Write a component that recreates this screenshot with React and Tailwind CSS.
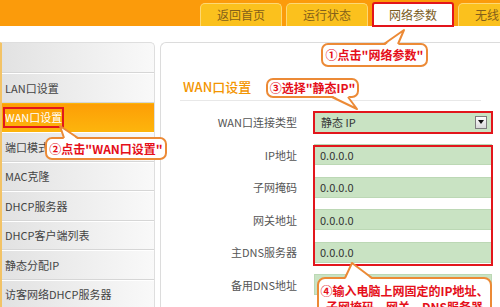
import React from "react";

const tabs = ["返回首页", "运行状态", "网络参数", "无线设置"];
const menu = [
  "LAN口设置",
  "WAN口设置",
  "端口模式",
  "MAC克隆",
  "DHCP服务器",
  "DHCP客户端列表",
  "静态分配IP",
  "访客网络DHCP服务器",
];
const rows = [
  ["IP地址", "0.0.0.0"],
  ["子网掩码", "0.0.0.0"],
  ["网关地址", "0.0.0.0"],
  ["主DNS服务器", "0.0.0.0"],
  ["备用DNS地址", "0.0.0.0"],
];

function Bubble({ className, children }) {
  return (
    <div
      className={
        "absolute flex items-center justify-center rounded-[7px] border-2 border-[#ec8a36] bg-white text-[12px] font-bold leading-none text-[#e50f1a] whitespace-nowrap " +
        className
      }
    >
      {children}
    </div>
  );
}

export default function App() {
  return (
    <div className="relative h-[307px] w-[500px] overflow-hidden bg-white font-['Noto_Sans_CJK_SC','Noto_Sans',sans-serif]">
      {/* top bar */}
      <div className="flex h-[26px] items-end gap-[4px] bg-[#fb9b0b] pl-[200px]">
        {tabs.map((t, i) =>
          i === 2 ? (
            <div
              key={t}
              className="relative z-10 mb-[-1px] flex h-[25px] w-[82px] shrink-0 items-center justify-center rounded-t-[3px] border-2 border-[#e3141b] bg-white text-[12px] text-[#7a5b1c]"
            >
              {t}
            </div>
          ) : (
            <div
              key={t}
              className="flex h-[23px] w-[82px] shrink-0 items-center justify-center rounded-t-[5px] border border-b-0 border-[#fdd873] bg-[#fbc11d] text-[12px] text-[#84601a]"
            >
              {t}
            </div>
          )
        )}
      </div>
      <div className="h-[16px]" />
      {/* main */}
      <div className="flex h-[265px] gap-[5px]">
        {/* sidebar */}
        <div className="w-[155px] shrink-0 rounded-tr-[5px] border-l-2 border-t border-r border-[#f3c366] border-t-[#dedede] border-r-[#dedede] bg-gradient-to-r from-[#e2e2e2] to-[#f9f9f9]">
          <div className="h-[30px] border-b border-[#d6d6d6]" />
          {menu.map((m, i) => (
            <div
              key={m}
              className={
                "flex h-[29.5px] items-center border-b border-t pl-[3px] text-[11px] " +
                (i === 1
                  ? "border-[#fdb40a] bg-gradient-to-b from-[#fd9e06] to-[#fdb40c] text-white"
                  : "border-b-[#d6d6d6] border-t-white text-[#444]")
              }
            >
              {m}
            </div>
          ))}
        </div>
        {/* content */}
        <div className="flex-1 rounded-tl-[6px] border-l border-t border-[#dcdcdc] bg-white">
          <div className="mx-[19px] mt-[35px] border-b border-[#e8e8e8] pb-[4px] pl-[3px] text-[13px] font-medium leading-[18px] text-[#f39500]">
            WAN口设置
          </div>
          <div className="mt-[5px] flex flex-col">
            <div className="flex h-[32.5px] items-center">
              <div className="w-[136px] shrink-0 text-right text-[11px] text-[#555]">WAN口连接类型</div>
              <div className="ml-[16px] flex h-[23px] w-[180px] items-center justify-between border-2 border-[#e2161c] bg-[#c9e3c3] pl-[6px] pr-[4px] text-[11px] text-[#333]">
                <span>静态 IP</span>
                <span className="flex h-[13px] w-[12px] items-center justify-center border border-[#7d7d7d] bg-gradient-to-b from-white to-[#d8d8d8]">
                  <svg width="6" height="4" viewBox="0 0 6 4">
                    <path d="M0 0H6L3 4Z" fill="#111" />
                  </svg>
                </span>
              </div>
            </div>
            {rows.map(([l, v]) => (
              <div key={l} className="flex h-[32.5px] items-center">
                <div className="w-[136px] shrink-0 text-right text-[11px] text-[#555]">{l}</div>
                <div className="ml-[17px] flex h-[21px] w-[178px] items-center border border-[#bcd8b5] bg-[#c9e3c3] pl-[5px] text-[11px] text-[#333]">
                  {v}
                </div>
              </div>
            ))}
          </div>
        </div>
      </div>

      {/* annotations */}
      <div className="absolute left-[3px] top-[107px] h-[21px] w-[61px] border-2 border-[#e2161c]" />
      <div className="absolute left-[313px] top-[145px] h-[121px] w-[180px] border-2 border-[#e2161c]" />

      <Bubble className="left-[321px] top-[43px] h-[24px] w-[107px]">①点击"网络参数"</Bubble>
      <Bubble className="left-[45px] top-[137px] h-[23px] w-[122px]">②点击"WAN口设置"</Bubble>
      <Bubble className="left-[266px] top-[78px] h-[20px] w-[93px]">③选择"静态IP"</Bubble>
      <div className="absolute left-[317px] top-[277px] flex h-[44px] w-[175px] flex-col items-center rounded-[8px] border-2 border-[#ec8a36] bg-white pt-[4px] text-[12px] font-bold leading-[16px] text-[#e50f1a]">
        <span>④输入电脑上网固定的IP地址、</span>
        <span>子网掩码、网关、DNS服务器</span>
      </div>

      <svg className="pointer-events-none absolute left-0 top-0" width="500" height="307" viewBox="0 0 500 307">
        <g fill="#fff" stroke="none">
          <polygon points="384,46 404,30 398,46" />
          <polygon points="64,139.5 60,126 78,139.5" />
          <polygon points="332,95.5 357,109 348,95.5" />
          <polygon points="345,279.5 352,263 372,279.5" />
        </g>
        <g fill="none" stroke="#ec8a36" strokeWidth="2" strokeLinejoin="round">
          <polyline points="384,44 404,30 398,44" />
          <polyline points="64,138 60,126 78,138" />
          <polyline points="332,97 357,109 348,97" />
          <polyline points="345,278 352,263 372,278" />
        </g>
      </svg>
    </div>
  );
}
